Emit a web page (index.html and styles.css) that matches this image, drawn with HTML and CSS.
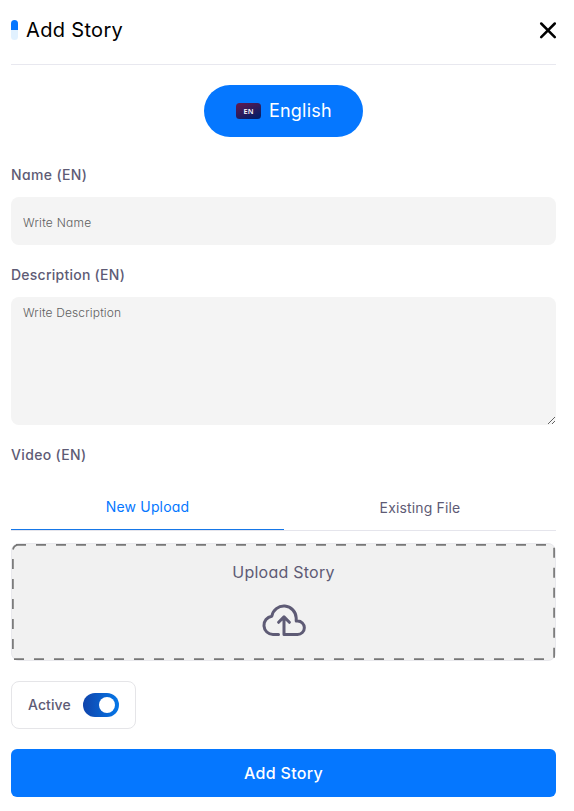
FILE: index.html
```html
<!DOCTYPE html>
<html lang="en">
<head>
<meta charset="utf-8">
<title>Add Story</title>
<link rel="stylesheet" href="styles.css">
</head>
<body>
<main class="dialog">
  <header class="header">
    <span class="accent"></span>
    <h1 class="title"><span class="t t-title">Add Story</span></h1>
    <svg class="close" viewBox="0 0 18 18"><path d="M2.2 2.5 15.8 16.1M15.8 2.5 2.2 16.1"/></svg>
  </header>
  <div class="language">
    <svg class="flag" viewBox="0 0 25 16">
      <defs><linearGradient id="flag" x1="0" y1="0" x2=".65" y2="1"><stop offset="0" stop-color="#65194d"/><stop offset="1" stop-color="#071d67"/></linearGradient></defs>
      <rect width="25" height="16" rx="3.5" fill="url(#flag)"/>
      <text x="12.5" y="10.7" text-anchor="middle">EN</text>
    </svg>
    <span class="t t-english">English</span>
  </div>
  <form class="form">
    <label class="label" for="name"><span class="t t-name">Name (EN)</span></label>
    <input class="field input" id="name" placeholder="Write Name">
    <label class="label" for="description"><span class="t t-description">Description (EN)</span></label>
    <textarea class="field textarea" id="description" placeholder="Write Description"></textarea>
    <div class="label"><span class="t t-video">Video (EN)</span></div>
    <div class="tabs">
      <div class="tab selected"><span class="t t-new">New Upload</span></div>
      <div class="tab"><span class="t t-existing">Existing File</span></div>
    </div>
    <div class="upload">
      <svg class="dashes" viewBox="0 0 543 116"><path d="M1 5.5Q1.8 1.6 5.5 .9M4 .9H539M542.1 3.8V114M532 115.1H2M.9 105V12"/></svg>
      <span class="t t-upload">Upload Story</span>
      <svg class="cloud" viewBox="0 0 44 32"><path d="M16.5 30.5H11A9.2 9.2 0 0 1 9.8 12.2A12.3 12.3 0 0 1 34.2 14V17H35.6A6.75 6.75 0 0 1 35.6 30.5H22V13M16.6 18.3 22 12.9 27.4 18.3"/></svg>
    </div>
    <div class="active">
      <span class="t t-active">Active</span>
      <span class="switch"><span class="knob"></span></span>
    </div>
    <button class="submit" type="button"><span class="t t-submit">Add Story</span></button>
  </form>
</main>
</body>
</html>
```
FILE: styles.css
```css
* { box-sizing: border-box; }
body {
  margin: 0;
  background: #fff;
  color: #5e5b75;
  font-family: Inter, sans-serif;
  font-feature-settings: "cv11";
}
.dialog { width: 545px; margin-left: 11px; }
.t { white-space: nowrap; }
.t-title, .t-submit { letter-spacing: .33px; }
.t-english { padding-bottom: 2px; letter-spacing: .2px; }
.t-name, .t-video { letter-spacing: .35px; }
.t-description { letter-spacing: .25px; }
.t-new { letter-spacing: .15px; }
.t-existing { letter-spacing: .15px; }
.t-upload { letter-spacing: .24px; }
.t-active { padding-bottom: 2px; letter-spacing: .1px; }
.header {
  display: flex;
  align-items: center;
  height: 65px;
  padding-bottom: 4px;
  border-bottom: 1px solid #e8e8ef;
}
.accent {
  width: 7px;
  height: 20px;
  border-radius: 4px;
  background: linear-gradient(#0577ff 50%, #e1f1ff 50%);
}
.title { flex: 1; margin: 0 0 0 8px; color: #000; font-size: 20px; font-weight: 400; line-height: 28px; }
.close { width: 18px; height: 18px; margin-right: -1px; fill: none; stroke: #000; stroke-width: 2.5; stroke-linecap: round; }
.language {
  display: flex;
  align-items: center;
  width: 159px;
  height: 52px;
  margin: 20px auto 0;
  padding-left: 32px;
  gap: 8px;
  border-radius: 26px;
  background: #0577ff;
  color: #fff;
  font-size: 18px;
}
.flag { width: 25px; height: 16px; flex: none; }
.flag text { fill: #fff; font: 600 7.3px "Noto Sans", sans-serif; }
.form { display: flex; flex-direction: column; }
.label { height: 20px; margin-top: 28px; font-size: 14px; font-weight: 500; line-height: 20px; }
.field {
  display: block;
  width: 545px;
  margin: 12px 0 0;
  border: 0;
  border-radius: 8px;
  background: #f4f4f4;
  color: #5e5b75;
  font: 300 12px/18px Inter, sans-serif;
  font-feature-settings: "cv11";
}
.field::placeholder { color: #606060; }
.input { height: 48px; padding: 2px 12px 0; letter-spacing: .24px; }
.input + .label { margin-top: 20px; }
.textarea { height: 128px; padding: 7px 12px; letter-spacing: .15px; resize: both; }
.textarea + .label { margin-top: 20px; }
.tabs { display: grid; grid-template-columns: 273px 272px; height: 46px; margin-top: 20px; border-bottom: 1px solid #e5e5ec; font-size: 14px; line-height: 20px; }
.tab { padding-top: 13px; text-align: center; }
.selected { padding-top: 12px; border-bottom: 1px solid #1677e8; color: #0577ff; }
.upload {
  position: relative;
  display: flex;
  flex-direction: column;
  align-items: center;
  height: 118px;
  margin-top: 12px;
  padding-top: 16px;
  border: 1px solid #e8e8ec;
  border-radius: 8px;
  background: #f1f1f1;
  font-size: 16px;
  line-height: 24px;
}
.dashes { position: absolute; inset: 0; width: 543px; height: 116px; fill: none; stroke: #777; stroke-width: 1.7; stroke-dasharray: 10; }
.cloud { width: 44px; height: 32px; margin-top: 20px; fill: none; stroke: #5e5b75; stroke-width: 3; stroke-linecap: round; stroke-linejoin: round; }
.active {
  display: flex;
  align-items: center;
  justify-content: space-between;
  width: 125px;
  height: 48px;
  margin-top: 20px;
  padding: 0 16px;
  border: 1px solid #e5e5e8;
  border-radius: 8px;
  font-size: 14px;
  font-weight: 500;
}
.switch { display: flex; align-items: center; justify-content: flex-end; width: 36px; height: 24px; padding-right: 4px; border-radius: 12px; background: linear-gradient(90deg, #1044ab, #0577e8); }
.knob { width: 16px; height: 16px; border-radius: 50%; background: #fff; }
.submit { height: 48px; margin: 20px 0 0; padding: 0; border: 0; border-radius: 6px; background: #0577ff; color: #fff; font: 500 16px/24px Inter, sans-serif; font-feature-settings: "cv11"; }
```
